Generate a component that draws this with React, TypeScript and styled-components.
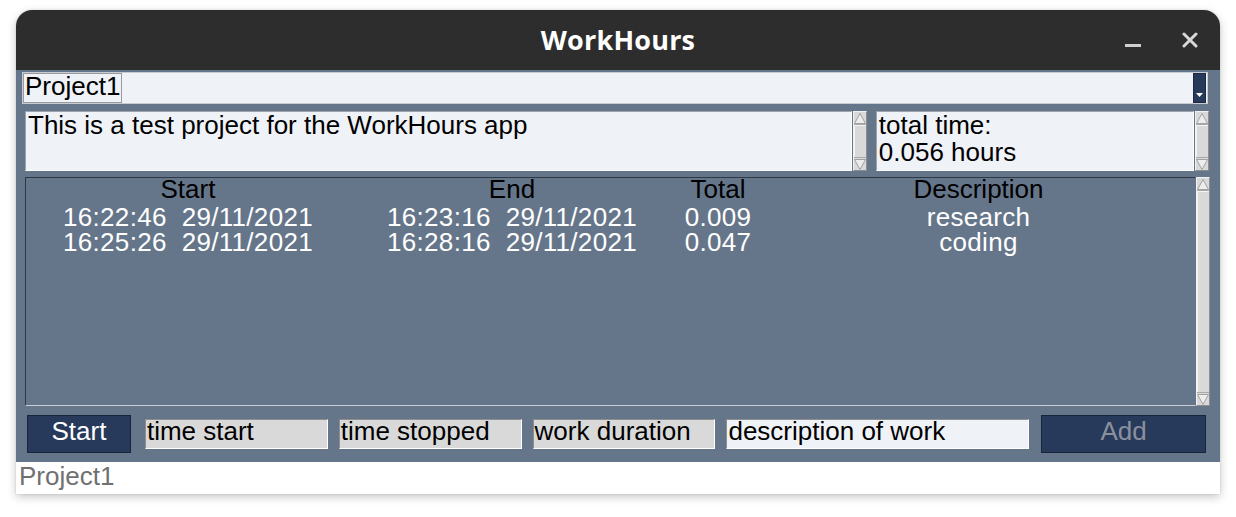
import React from "react";
import styled, { createGlobalStyle } from "styled-components";

const GlobalStyle = createGlobalStyle`
  html, body { margin: 0; padding: 0; background: #ffffff; }
  body { font-family: "Liberation Sans", Arial, sans-serif; }
  * { box-sizing: border-box; }
`;

const Page = styled.div`
  padding: 10px 16px 20px 16px;
  width: 1236px;
`;

const Window = styled.div`
  width: 1204px;
  border-radius: 16px 16px 0 0;
  overflow: hidden;
  box-shadow: 0 3px 10px rgba(0, 0, 0, 0.22), 0 0 2px rgba(0, 0, 0, 0.15);
  background: #ffffff;
`;

const TitleBar = styled.div`
  height: 60px;
  background: #2d2d2d;
  display: grid;
  grid-template-columns: 1fr auto 1fr;
  align-items: center;
`;

const Title = styled.div`
  grid-column: 2;
  font-family: "Open Sans", "DejaVu Sans", sans-serif;
  font-weight: 700;
  font-size: 27px;
  color: #ffffff;
  letter-spacing: 0.2px;
  margin-top: -1px;
`;

const Controls = styled.div`
  grid-column: 3;
  justify-self: end;
  display: flex;
  align-items: center;
  gap: 41px;
  padding-right: 22px;
`;

const Content = styled.div`
  background: #66768a;
  padding: 2px 10px 9px 6px;
  display: flex;
  flex-direction: column;
`;

const Combo = styled.div`
  height: 32px;
  margin-right: 2px;
  background: #eff2f7;
  border: 1px solid #c7ccd4;
  display: flex;
  align-items: stretch;
`;

const ComboValue = styled.div`
  border: 1px solid #9a9a9a;
  font-size: 26px;
  line-height: 25px;
  padding: 0 1px 0 1px;
  color: #000;
`;

const Grow = styled.div`
  flex: 1;
`;

const DropButton = styled.div`
  width: 13px;
  margin: 0 1px 0 0;
  background: #283a5b;
  border: 1px solid #1c2940;
  display: flex;
  align-items: flex-end;
  justify-content: center;
  padding-bottom: 4px;
`;

const Row = styled.div<{ $top: number; $height: number; $left: number; $right?: number }>`
  display: flex;
  margin-top: ${(p) => p.$top}px;
  height: ${(p) => p.$height}px;
  padding-left: ${(p) => p.$left}px;
  padding-right: ${(p) => p.$right ?? 0}px;
  align-items: stretch;
`;

const TextBox = styled.div<{ $width: number; $lh: number }>`
  width: ${(p) => p.$width}px;
  background: #eff2f7;
  border: 1px solid;
  border-color: #9ea4ad #ffffff #ffffff #9ea4ad;
  font-size: 26px;
  line-height: ${(p) => p.$lh}px;
  padding: 0 0 0 2px;
  color: #000;
  white-space: pre-line;
`;

const ScrollBar = styled.div<{ $gap: number }>`
  width: 14px;
  margin-left: ${(p) => p.$gap}px;
  background: #d9d9d9;
  border: 1px solid;
  border-color: #f2f2f2 #8e8e8e #8e8e8e #f2f2f2;
  display: flex;
  flex-direction: column;
`;

const Arrow = styled.div`
  height: 12px;
  display: flex;
  align-items: center;
  justify-content: center;
  background: #d9d9d9;
`;

const Thumb = styled.div`
  flex: 1;
  background: #d9d9d9;
  border-top: 1px solid #a9a9a9;
  border-bottom: 1px solid #a9a9a9;
  box-shadow: inset 1px 1px 0 #f4f4f4;
`;

const Spacer = styled.div<{ $w: number }>`
  width: ${(p) => p.$w}px;
`;

const Table = styled.div`
  flex: 1;
  border: 1px solid;
  border-color: #2f3946 transparent #c9ced6 #2f3946;
  display: grid;
  grid-template-columns: 324px 324px 88px 1fr;
  grid-auto-rows: 25px;
  grid-template-rows: 27px;
  align-content: start;
`;

const HeadCell = styled.div`
  text-align: center;
  font-size: 26px;
  line-height: 23px;
  color: #000;
  white-space: pre;
`;

const Cell = styled.div`
  text-align: center;
  font-size: 26px;
  line-height: 25px;
  color: #ffffff;
  white-space: pre;
  letter-spacing: 0.3px;
`;

const Button = styled.div<{ $width: number; $dim?: boolean; $ml: number }>`
  width: ${(p) => p.$width}px;
  margin-left: ${(p) => p.$ml}px;
  background: #283a5b;
  border: 1px solid #1a2438;
  color: ${(p) => (p.$dim ? "#8a919c" : "#ffffff")};
  font-size: 26px;
  line-height: 30px;
  text-align: center;
`;

const Field = styled.div<{ $width: number; $light?: boolean; $ml: number }>`
  width: ${(p) => p.$width}px;
  margin-left: ${(p) => p.$ml}px;
  align-self: center;
  height: 30px;
  background: ${(p) => (p.$light ? "#eff2f7" : "#d9d9d9")};
  border: 1px solid;
  border-color: #8e8e8e #ffffff #ffffff #8e8e8e;
  font-size: 26px;
  line-height: 23px;
  padding-left: 1px;
  color: #000;
  white-space: pre;
`;

const Footer = styled.div`
  height: 32px;
  background: #ffffff;
  color: #707070;
  font-size: 26px;
  line-height: 28px;
  padding-left: 3px;
`;

const UpArrow = () => (
  <svg width="12" height="11" viewBox="0 0 12 11">
    <path d="M6 0.5 L11.5 10.5 L0.5 10.5 Z" fill="#ededed" stroke="#a2a2a2" strokeWidth="1" />
  </svg>
);

const DownArrow = () => (
  <svg width="12" height="11" viewBox="0 0 12 11">
    <path d="M0.5 0.5 L11.5 0.5 L6 10.5 Z" fill="#ededed" stroke="#a2a2a2" strokeWidth="1" />
  </svg>
);

const Scroll = ({ gap }: { gap: number }) => (
  <ScrollBar $gap={gap}>
    <Arrow>
      <UpArrow />
    </Arrow>
    <Thumb />
    <Arrow>
      <DownArrow />
    </Arrow>
  </ScrollBar>
);

const rows = [
  ["16:22:46  29/11/2021", "16:23:16  29/11/2021", "0.009", "research"],
  ["16:25:26  29/11/2021", "16:28:16  29/11/2021", "0.047", "coding"],
];

export default function App() {
  return (
    <>
      <GlobalStyle />
      <Page>
        <Window>
          <TitleBar>
            <Title>WorkHours</Title>
            <Controls>
              <svg width="16" height="16" viewBox="0 0 16 16">
                <rect x="0" y="12" width="16" height="3" fill="#d0d0d0" />
              </svg>
              <svg width="16" height="16" viewBox="0 0 16 16">
                <path d="M2 2 L14 14 M14 2 L2 14" stroke="#d8d8d8" strokeWidth="3" strokeLinecap="round" />
              </svg>
            </Controls>
          </TitleBar>
          <Content>
            <Combo>
              <ComboValue>Project1</ComboValue>
              <Grow />
              <DropButton>
                <svg width="7" height="5" viewBox="0 0 7 5">
                  <path d="M0 0 L7 0 L3.5 4 Z" fill="#ffffff" />
                </svg>
              </DropButton>
            </Combo>
            <Row $top={7} $height={60} $left={3} $right={1}>
              <TextBox $width={829} $lh={26}>This is a test project for the WorkHours app</TextBox>
              <Scroll gap={1} />
              <Spacer $w={9} />
              <TextBox $width={319} $lh={27}>{"total time:\n0.056 hours"}</TextBox>
              <Scroll gap={1} />
            </Row>
            <Row $top={6} $height={229} $left={3}>
              <Table>
                <HeadCell>Start</HeadCell>
                <HeadCell>End</HeadCell>
                <HeadCell>Total</HeadCell>
                <HeadCell>Description</HeadCell>
                {rows.map((r, i) =>
                  r.map((c, j) => <Cell key={`${i}-${j}`}>{c}</Cell>)
                )}
              </Table>
              <Scroll gap={0} />
            </Row>
            <Row $top={9} $height={38} $left={5} $right={4}>
              <Button $width={104} $ml={0}>Start</Button>
              <Field $width={183} $ml={14}>time start</Field>
              <Field $width={183} $ml={11}>time stopped</Field>
              <Field $width={183} $ml={11}>work duration</Field>
              <Field $width={303} $ml={11} $light>description of work</Field>
              <Button $width={165} $ml={12} $dim>Add</Button>
            </Row>
          </Content>
          <Footer>Project1</Footer>
        </Window>
      </Page>
    </>
  );
}
